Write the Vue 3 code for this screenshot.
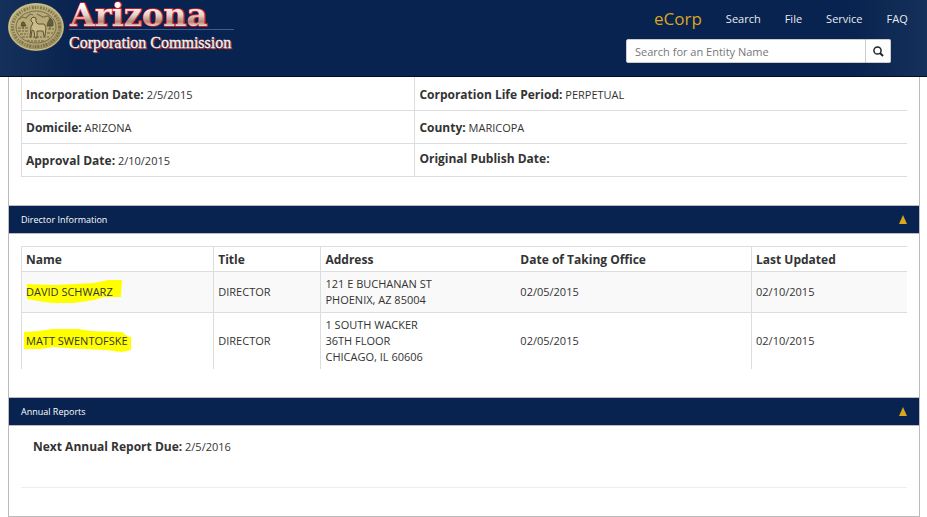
<script setup>
import { ref } from 'vue'

const query = ref('')
const links = ['Search', 'File', 'Service', 'FAQ']

const details = [
  [
    { label: 'Incorporation Date:', value: '2/5/2015' },
    { label: 'Corporation Life Period:', value: 'PERPETUAL' },
  ],
  [
    { label: 'Domicile:', value: 'ARIZONA' },
    { label: 'County:', value: 'MARICOPA' },
  ],
  [
    { label: 'Approval Date:', value: '2/10/2015' },
    { label: 'Original Publish Date:', value: '' },
  ],
]

const directors = [
  {
    name: 'DAVID SCHWARZ',
    title: 'DIRECTOR',
    address: ['121 E BUCHANAN ST', 'PHOENIX, AZ 85004'],
    taken: '02/05/2015',
    updated: '02/10/2015',
    mark: 'M3 4 L30 5 L50 4 L70 3 L84 0 L98 0 L97 17 L80 17 L70 20 L50 23 L28 23 L14 21 L3 19 Z',
  },
  {
    name: 'MATT SWENTOFSKE',
    title: 'DIRECTOR',
    address: ['1 SOUTH WACKER', '36TH FLOOR', 'CHICAGO, IL 60606'],
    taken: '02/05/2015',
    updated: '02/10/2015',
    mark: 'M0 3 L16 2 L28 0 L55 0 L66 2 L98 3 L103 7 L107 8 L107 21 L98 23 L82 21 L60 20 L40 19 L30 18 L16 20 L0 20 Z',
  },
]
</script>

<template>
  <div class="page">
    <header class="masthead">
      <a class="brand" href="#" aria-label="Arizona Corporation Commission">
        <svg class="logo" width="240" height="60" viewBox="0 0 240 60">
          <defs>
            <radialGradient id="gold" cx="45%" cy="40%" r="62%">
              <stop offset="0" stop-color="#c9bd85" />
              <stop offset="0.7" stop-color="#b5a875" />
              <stop offset="1" stop-color="#8f8356" />
            </radialGradient>
            <linearGradient id="metal" x1="0" y1="0" x2="0" y2="1">
              <stop offset="0.25" stop-color="#ffffff" />
              <stop offset="0.5" stop-color="#e3d3cb" />
              <stop offset="0.68" stop-color="#b58474" />
              <stop offset="0.8" stop-color="#f1e4df" />
            </linearGradient>
          </defs>
          <ellipse cx="36" cy="27" rx="28" ry="24" fill="url(#gold)" />
          <ellipse cx="36" cy="27" rx="27" ry="23" fill="none" stroke="#d2c696" stroke-width="1" />
          <ellipse cx="36" cy="27" rx="23.5" ry="19.5" fill="none" stroke="#6f6641" stroke-width="3" stroke-dasharray="1.6 1.2 1 1.5 2 1" opacity="0.75" />
          <ellipse cx="36" cy="27" rx="20" ry="16" fill="#b8ab79" stroke="#776d45" />
          <path d="M18 20 L22 17 L26 18 L30 14 L33 15 M37 14 L43 17 L48 16 L53 21" fill="none" stroke="#7d7349" stroke-width="1.2" />
          <path d="M31 19 L33 17 L36 18 L36 22 L38 24 L44 24 L46 27 L45 36 L44 36 L43 31 L37 31 L37 38 L35 38 L34 31 L32 30 L31 37 L30 37 L31 27 L33 23 L31 21 Z" fill="#cabd88" stroke="#514a2d" stroke-width="0.9" />
          <path d="M50 29 V24 M47 26 L48 22 L50 18 L53 22 L53 26 Z M23 29 V25 M21 26 L22 22 L24 22 L26 26 Z" fill="#665e39" stroke="#514a2d" stroke-width="0.8" />
          <path d="M18 28 H28 M18 31 H29 M20 34 H28 M48 29 H54 M47 33 H53 M22 37 H50 M27 41 H45" fill="none" stroke="#6a613c" stroke-width="1.1" stroke-dasharray="3 1 2 1" />
          <g class="logo-state">
            <text x="70" y="26" fill="#e31b23" stroke="#e31b23" stroke-width="1.6" stroke-linejoin="round">Arizona</text>
            <text x="70" y="26" fill="url(#metal)">Arizona</text>
          </g>
          <path d="M69 29.5 H234" stroke="#425d8c" />
          <g class="logo-body">
            <text x="70" y="49" fill="#9b2d2a" stroke="#9b2d2a" stroke-width="0.6">Corporation Commission</text>
            <text x="69" y="48" fill="#f4f2f2" stroke="#f4f2f2" stroke-width="0.3">Corporation Commission</text>
          </g>
        </svg>
      </a>
      <div class="tools">
        <nav class="menu">
          <a class="ecorp" href="#">eCorp</a>
          <a v-for="link in links" :key="link" class="link" href="#">{{ link }}</a>
        </nav>
        <form class="search" role="search" @submit.prevent>
          <input v-model="query" class="field" type="text" placeholder="Search for an Entity Name" aria-label="Search for an Entity Name" />
          <button class="go" type="submit" aria-label="Search">
            <svg width="12" height="12" viewBox="0 0 12 12">
              <circle cx="5.5" cy="5.5" r="3.6" fill="none" stroke="#222" stroke-width="1.5" />
              <path d="M8 8 L11 11" stroke="#222" stroke-width="2" />
            </svg>
          </button>
        </form>
      </div>
    </header>

    <main class="panel">
      <table class="details">
        <tbody>
          <tr v-for="(row, i) in details" :key="i">
            <td v-for="cell in row" :key="cell.label" :class="{ blank: !cell.value }">
              <b>{{ cell.label }}</b> {{ cell.value }}
            </td>
          </tr>
        </tbody>
      </table>

      <section>
        <h2 class="bar">
          <span>Director Information</span>
          <svg class="caret" width="8" height="9" viewBox="0 0 8 9"><path d="M4 0 L8 9 H0 Z" fill="#daa520" /></svg>
        </h2>
        <table class="directors">
          <colgroup>
            <col class="c-name" />
            <col class="c-title" />
            <col class="c-address" />
            <col class="c-taken" />
            <col />
          </colgroup>
          <thead>
            <tr>
              <th>Name</th>
              <th>Title</th>
              <th>Address</th>
              <th class="open">Date of Taking Office</th>
              <th>Last Updated</th>
            </tr>
          </thead>
          <tbody>
            <tr v-for="d in directors" :key="d.name">
              <td>
                <span class="marked">
                  <svg class="mark" width="108" height="24" viewBox="0 0 108 24"><path :d="d.mark" fill="#ffff00" /></svg>
                  <span class="marked-text">{{ d.name }}</span>
                </span>
              </td>
              <td>{{ d.title }}</td>
              <td><div v-for="line in d.address" :key="line">{{ line }}</div></td>
              <td class="open">{{ d.taken }}</td>
              <td>{{ d.updated }}</td>
            </tr>
          </tbody>
        </table>
      </section>

      <section>
        <h2 class="bar">
          <span>Annual Reports</span>
          <svg class="caret" width="8" height="9" viewBox="0 0 8 9"><path d="M4 0 L8 9 H0 Z" fill="#daa520" /></svg>
        </h2>
        <p class="due"><b>Next Annual Report Due:</b> 2/5/2016</p>
        <hr class="rule" />
      </section>
    </main>
  </div>
</template>

<style>
body {
  background: #fff;
}
</style>

<style scoped>
.page {
  font-family: "Open Sans", "Noto Sans", sans-serif;
  font-size: 11px;
  line-height: 16px;
  color: #333;
}

.masthead {
  display: flex;
  justify-content: space-between;
  align-items: flex-start;
  height: 76px;
  border-bottom: 1px solid #020d20;
  background: linear-gradient(90deg, #15305a 0, #08234f 76px, #08234f calc(100% - 76px), #15305a 100%);
}

.brand,
.logo {
  display: block;
}

.logo-state {
  font: bold 32px "DejaVu Serif", serif;
}

.logo-body {
  font: 16px "Liberation Serif", serif;
}

.tools {
  width: 301px;
  padding-top: 7px;
}

.menu {
  display: flex;
  align-items: center;
  gap: 24px;
  height: 24px;
  padding-left: 28px;
}

.menu a {
  color: #e8ebf0;
  text-decoration: none;
}

.menu .ecorp {
  font-size: 17px;
  color: #daa520;
}

.search {
  display: flex;
  width: 265px;
  height: 24px;
  margin-top: 8px;
}

.field,
.go {
  box-sizing: border-box;
  border: 1px solid #ccc;
  background: #fff;
}

.field {
  flex: 1;
  min-width: 0;
  padding: 0 8px;
  border-radius: 2px 0 0 2px;
  font: 11px "Open Sans", sans-serif;
  color: #333;
}

.field::placeholder {
  color: #777;
}

.go {
  display: flex;
  align-items: center;
  justify-content: center;
  width: 25px;
  padding: 0;
  border-left: 0;
  border-radius: 0 2px 2px 0;
}

.panel {
  margin: 0 7px 0 8px;
  border: 1px solid #bbb;
  border-top: 0;
}

b,
th {
  font-size: 12px;
  font-weight: 700;
}

table {
  width: calc(100% - 24px);
  margin: 0 12px;
  border-spacing: 0;
  table-layout: fixed;
}

td,
th {
  box-sizing: border-box;
  padding: 4px;
  border-left: 1px solid #ddd;
  text-align: left;
}

.details td {
  height: 33px;
  padding-top: 6px;
  border-bottom: 1px solid #ddd;
}

.details tr:first-child td {
  height: 34px;
}

.details td:first-child {
  width: 44.4%;
}

.details .blank {
  padding-bottom: 8px;
}

.bar {
  display: flex;
  justify-content: space-between;
  align-items: center;
  height: 27px;
  margin: 28px 0 12px;
  padding: 0 12px;
  border: solid #bbb;
  border-width: 1px 0;
  background: #08234f;
  color: #fff;
  font-size: 9px;
  font-weight: 400;
}

.directors th {
  padding: 5px 4px 3px;
  border-top: 1px solid #ddd;
}

.directors tbody td {
  border-top: 1px solid #ddd;
}

.directors tbody tr:nth-child(odd) {
  background: #f9f9f9;
}

.directors .open {
  padding-left: 5px;
  border-left: 0;
}

.c-name {
  width: 21.7%;
}

.c-title {
  width: 12.1%;
}

.c-address {
  width: 22%;
}

.c-taken {
  width: 26.6%;
}

.marked {
  position: relative;
}

.mark {
  position: absolute;
  left: -2px;
  top: -4px;
}

.marked-text {
  position: relative;
}

.due {
  margin: 0 24px;
  padding-top: 1px;
}

.rule {
  margin: 32px 12px 28px;
  border: 0;
  border-top: 1px solid #eee;
}
</style>
